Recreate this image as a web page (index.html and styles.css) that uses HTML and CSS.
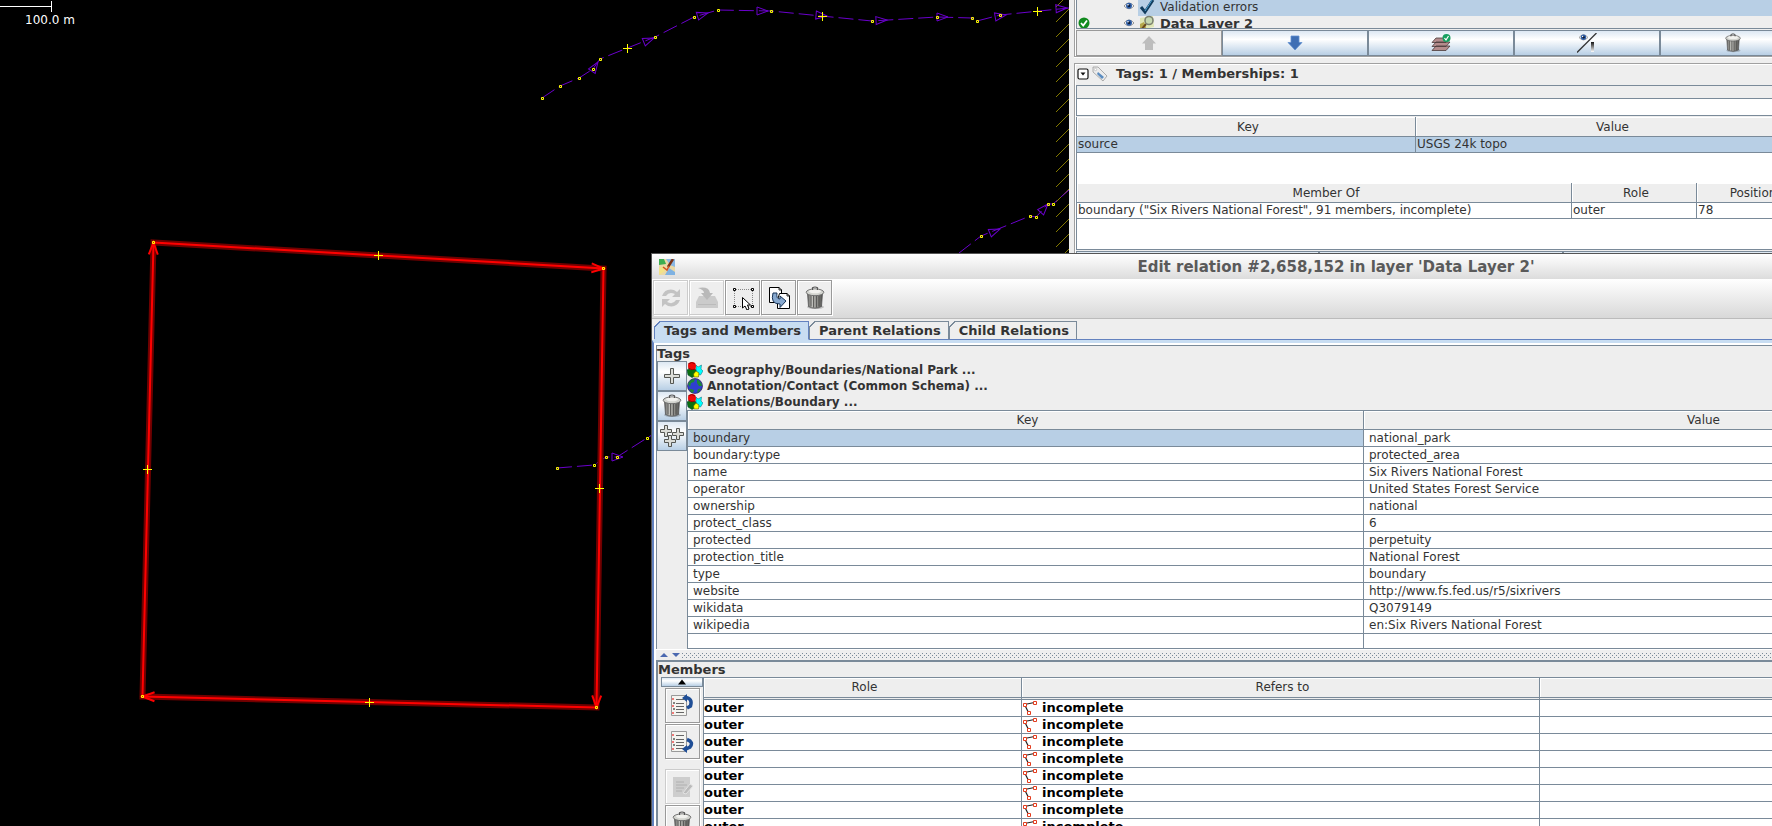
FILE: index.html
```html
<!DOCTYPE html>
<html lang="en">
<head>
<meta charset="utf-8">
<title>Edit relation #2,658,152 in layer 'Data Layer 2'</title>
<link rel="stylesheet" href="styles.css">
</head>
<body>
<svg class="sprite" aria-hidden="true">
  <defs>
    <linearGradient id="metal" x1="0" x2="1" y1="0" y2="0">
      <stop offset="0" stop-color="#5c5c5a"/><stop offset=".3" stop-color="#c4c4c0"/><stop offset=".6" stop-color="#989894"/><stop offset="1" stop-color="#4f4f4d"/>
    </linearGradient>
    <linearGradient id="fade" x1="0" x2="0" y1="0" y2="1">
      <stop offset="0" stop-color="#111"/><stop offset="1" stop-color="#fff"/>
    </linearGradient>
  </defs>
  <symbol id="trash" viewBox="0 0 24 24">
    <ellipse cx="12.500" cy="21" rx="8.500" ry="2" fill="#000" opacity=".2"/>
    <path d="M4.500 7 5.500 20.500Q12 23.800 18.500 20.500L19.500 7Z" fill="url(#metal)" stroke="#555" stroke-width=".8"/>
    <path d="M8 9v11.500M10.600 9.500v12M13.400 9.500v12M16 9v11.500" stroke="#4c4c4a" stroke-width=".9"/>
    <ellipse cx="12" cy="6.300" rx="8.800" ry="3.400" fill="#d3d4cf" stroke="#666" stroke-width=".9"/>
    <ellipse cx="12" cy="5.300" rx="6" ry="1.900" fill="#f1f1ee"/>
    <path d="M9.500 4V1.800Q12 .2 14.500 1.800V4" fill="none" stroke="#555" stroke-width="1.200"/>
  </symbol>
  <symbol id="eye" viewBox="0 0 12 10">
    <path d="M1 5Q6-1 11 5 6 10.500 1 5Z" fill="#fff" stroke="#888" stroke-width=".9"/>
    <circle cx="6" cy="4.800" r="3" fill="#2f5fa8"/><circle cx="6" cy="4.800" r="1.400" fill="#0d1c38"/><circle cx="5" cy="3.800" r=".8" fill="#fff"/>
  </symbol>
  <symbol id="plus" viewBox="0 0 18 18">
    <path d="M7.500 1.500h3v6h6v3h-6v6h-3v-6h-6v-3h6z" fill="#dcddd8" stroke="#555753"/>
  </symbol>
  <symbol id="preset" viewBox="0 0 16 16">
    <path d="M9 3 11 5 14.500 3 14 7 16 9 13.500 13 9 12Z" fill="#0ff" stroke="#067" stroke-width=".5"/>
    <path d="M0 8 4 6 9 8 8 14 5 15.500 1 13Z" fill="#0a7010" stroke="#043" stroke-width=".6"/>
    <circle cx="5" cy="4" r="4" fill="#f00808"/><path d="M1 2Q5-1 8 2M1 6Q5 9 9 7" fill="none" stroke="#700" stroke-width=".7"/>
    <path d="M9 9 12 11 11.500 15 7 15 6.500 12Z" fill="#ff0" stroke="#550" stroke-width=".6"/>
  </symbol>
  <symbol id="globe" viewBox="0 0 16 16">
    <circle cx="8" cy="8" r="7.500" fill="#2e3fd0" stroke="#204" stroke-width=".6"/>
    <path d="M1 6Q3 1 8 1L7 4 4 5 3 9ZM10 1.500Q15 4 15 8L12 8 10 5ZM4 11 7 12 6 15Q3 14 2 11ZM11 11 14 10.500Q13 14 10 15Z" fill="#1d8738"/>
  </symbol>
  <symbol id="way" viewBox="0 0 16 16">
    <path d="M2.500 4.500 12.500 2.500M2.500 4.500 6.500 12.500" stroke="#222" stroke-width="1.200" fill="none"/>
    <path d="M1.500 3.500h3v3h-3zM11.500 1.500h3v3h-3zM5.500 11.500h3v3h-3z" fill="#fff" stroke="#e23c1e"/>
  </symbol>
  <symbol id="list" viewBox="0 0 24 24">
    <path d="M1.500 1.500h15v20h-15z" fill="#f4f4f0" stroke="#999"/>
    <path d="M6 5.500h8M6 9.500h8M6 12.500h8M6 15.500h8M6 18.500h8" stroke="#666"/>
    <path d="M3 4v2M3 11v2M3 18v2" stroke="#e00"/><path d="M4 8v2M4 14v2" stroke="#111"/>
  </symbol>
</svg>

<div class="desktop">
  <div class="workspace">
    <main class="map">
      <svg class="map-canvas" role="img" aria-label="Map view">
        <defs>
          <pattern id="hatch" patternUnits="userSpaceOnUse" x="1056" y="7" width="15" height="15">
            <path d="M-1 16 16-1M-1 1 1-1M14 16 16 14" stroke="#847a00" stroke-width="1"/>
          </pattern>
          <pattern id="dots" patternUnits="userSpaceOnUse" width="4" height="4">
            <path d="M0 0h1v1H0zM2 2h1v1H2z" fill="#7a8a99"/>
          </pattern>
          <path id="cross" d="M-4 0H5M.5-4.500V4.500" stroke="#ff0" fill="none"/>
          <path id="head" d="M0 0-11-4V4Z" fill="none" stroke="#6a00cc"/>
          <path id="node" d="M-1-1H1V1H-1Z" fill="none" stroke="#ff0"/>
          <path id="arrow" d="M-12-4.500 0 0-12 4.500" fill="none" stroke="#f00" stroke-width="2"/>
        </defs>
        <rect x="1056" y="0" width="13" height="253" fill="url(#hatch)"/>
        <g class="stream">
          <path d="M542 98 560 86 579 78 593 69 600 59 655 37 694 17 718 10 771 11 872 21 937 17 972 18 977 21 1000 15 1069 8"/>
          <path d="M959 253 981 236 1030 216 1036 217 1048 204 1053 204 1069 190"/>
          <path d="M557 468 594 465 606 457 617 457 647 438 652 435"/>
        </g>
        <use href="#head" transform="translate(598 62) rotate(-56)"/>
        <use href="#head" transform="translate(654 38) rotate(-22)"/>
        <use href="#head" transform="translate(708 13) rotate(-17)"/>
        <use href="#head" transform="translate(768 11)"/>
        <use href="#head" transform="translate(827 16) rotate(5)"/>
        <use href="#head" transform="translate(887 20) rotate(-3)"/>
        <use href="#head" transform="translate(948 17)"/>
        <use href="#head" transform="translate(1006 15) rotate(-10)"/>
        <use href="#head" transform="translate(1067 8) rotate(-4)"/>
        <use href="#head" transform="translate(1000 229) rotate(-22)"/>
        <use href="#head" transform="translate(1048 204) rotate(-48)"/>
        <use href="#head" transform="translate(623 457)"/>
        <g class="selected-way">
          <path class="halo" d="M153.500 242.500 603.500 268.500 596.500 707.500 142.500 696.500Z"/>
          <path class="core" d="M153.500 242.500 603.500 268.500 596.500 707.500 142.500 696.500Z"/>
        </g>
        <use href="#arrow" transform="translate(603.500 268.500) rotate(3)"/>
        <use href="#arrow" transform="translate(596.500 707.500) rotate(91)"/>
        <use href="#arrow" transform="translate(142.500 696.500) rotate(181)"/>
        <use href="#arrow" transform="translate(153.500 242.500) rotate(-89)"/>
        <g id="nodes">
          <use href="#node" x="542.500" y="98.500"/><use href="#node" x="560.500" y="86.500"/><use href="#node" x="579.500" y="78.500"/><use href="#node" x="593.500" y="69.500"/><use href="#node" x="600.500" y="59.500"/><use href="#node" x="655.500" y="37.500"/><use href="#node" x="694.500" y="17.500"/><use href="#node" x="718.500" y="10.500"/><use href="#node" x="771.500" y="11.500"/><use href="#node" x="872.500" y="21.500"/><use href="#node" x="937.500" y="17.500"/><use href="#node" x="972.500" y="18.500"/><use href="#node" x="977.500" y="21.500"/><use href="#node" x="1000.500" y="15.500"/>
          <use href="#node" x="981.500" y="236.500"/><use href="#node" x="1030.500" y="216.500"/><use href="#node" x="1036.500" y="217.500"/><use href="#node" x="1048.500" y="204.500"/><use href="#node" x="1053.500" y="204.500"/>
          <use href="#node" x="557.500" y="468.500"/><use href="#node" x="594.500" y="465.500"/><use href="#node" x="606.500" y="457.500"/><use href="#node" x="617.500" y="457.500"/><use href="#node" x="647.500" y="438.500"/>
          <use href="#node" x="153.500" y="242.500"/><use href="#node" x="603.500" y="268.500"/><use href="#node" x="596.500" y="707.500"/><use href="#node" x="142.500" y="696.500"/>
        </g>
        <use href="#cross" x="627" y="48.500"/><use href="#cross" x="822" y="16.500"/><use href="#cross" x="1037" y="11.500"/>
        <use href="#cross" x="378" y="255.500"/><use href="#cross" x="599" y="488.500"/><use href="#cross" x="369" y="702.500"/><use href="#cross" x="147" y="469.500"/>
        <path d="M0 6.500H51.500M51.500 1V12" stroke="#fff" fill="none"/>
        <text class="scale-text" x="25" y="24">100.0 m</text>
      </svg>
    </main>

    <aside class="sidebar">
      <section class="frame layers">
        <div class="layer-list">
          <div class="layer-row">
            <span></span>
            <svg class="eye" width="12" height="10"><use href="#eye"/></svg>
            <div class="layer-name selected">
              <svg width="16" height="16" viewBox="0 0 16 16"><path d="M2 7 6 12 14 0" fill="none" stroke="#123d5e" stroke-width="3"/><path d="M6 11 13 0" stroke="#4da0d0" stroke-width="1"/></svg>
              <span>Validation errors</span>
            </div>
          </div>
          <div class="layer-row">
            <svg class="ok" width="12" height="12" viewBox="0 0 12 12"><circle cx="6" cy="6" r="5.500" fill="#118a1e"/><path d="M3 6 5.200 8.500 9 3.500" fill="none" stroke="#fff" stroke-width="1.800"/></svg>
            <svg class="eye" width="12" height="10"><use href="#eye"/></svg>
            <div class="layer-name">
              <svg width="16" height="16" viewBox="0 0 16 16"><path d="M1 3 14 1 15 12 1 15Z" fill="#dfe6b4"/><path d="M1 9 5 7 8 15H1Z" fill="#b5a84c"/><path d="M2 15 7 9" stroke="#6b4a1e" stroke-width="2"/><circle cx="10" cy="5.500" r="4" fill="#c6d8b0" stroke="#7c8270" stroke-width="1.600"/></svg>
              <b>Data Layer 2</b>
            </div>
          </div>
        </div>
        <div class="layer-actions">
          <button class="flat" disabled aria-label="Move layer up"><svg width="16" height="16" viewBox="0 0 16 16"><path d="M8 1 15 8.500H12V15H4V8.500H1Z" fill="#bdbdbd"/></svg></button>
          <button aria-label="Move layer down"><svg width="16" height="16" viewBox="0 0 16 16"><path d="M4 1H12V7.500H15L8 15 1 7.500H4Z" fill="#3f6fb4" stroke="#5f8fd0" stroke-width=".8"/></svg></button>
          <button aria-label="Activate layer"><svg width="20" height="20" viewBox="0 0 20 20"><path d="M5 13H19L15 17.500H1ZM5 9H19L15 13.500H1ZM5 5H19L15 9.500H1Z" fill="#b48c8c" stroke="#4a3a3a" stroke-width=".8"/><circle cx="15.500" cy="5" r="4" fill="#16a060"/><path d="M13.500 5 15 7 17.500 3" fill="none" stroke="#fff" stroke-width="1.200"/></svg></button>
          <button aria-label="Toggle visibility"><svg width="20" height="20" viewBox="0 0 20 20"><use href="#eye" x="1" y="0" width="11" height="9"/><path d="M0 19.500 19.500 0" stroke="#333" stroke-width="1.300"/><rect x="14" y="9" width="3" height="10" fill="url(#fade)"/></svg></button>
          <button aria-label="Delete layer"><svg width="20" height="20"><use href="#trash"/></svg></button>
        </div>
      </section>

      <section class="frame props">
        <h2 class="props-title">
          <svg width="12" height="12" viewBox="0 0 12 12"><rect x="1" y="1" width="10" height="10" rx="1.500" fill="#fff" stroke="#111" stroke-width="1.200"/><path d="M3.500 4.500H8.500L6 7.500Z" fill="#111"/></svg>
          <svg width="16" height="16" viewBox="0 0 16 16"><path d="M1 1H6L15 10 11 15 1 6Z" fill="#ececec" stroke="#999" stroke-width=".8"/><path d="M6 6 12 11 10 13 5 8Z" fill="#5b8cc0"/><circle cx="3.500" cy="3.500" r="1.200" fill="#fff" stroke="#aaa" stroke-width=".6"/></svg>
          <span>Tags: 1 / Memberships: 1</span>
        </h2>
        <div class="props-spacer"></div>
        <input class="filter" type="text" aria-label="Filter tags">
        <table class="grid small tags-small">
          <colgroup><col class="c-key"><col></colgroup>
          <thead><tr><th>Key</th><th>Value</th></tr></thead>
          <tbody><tr class="sel"><td>source</td><td>USGS 24k topo</td></tr></tbody>
        </table>
        <table class="grid small">
          <colgroup><col class="c-member"><col class="c-role"><col></colgroup>
          <thead><tr><th>Member Of</th><th>Role</th><th>Position</th></tr></thead>
          <tbody><tr><td>boundary ("Six Rivers National Forest", 91 members, incomplete)</td><td>outer</td><td>78</td></tr></tbody>
        </table>
        <div class="props-footer"><span></span><span></span><span></span></div>
      </section>
    </aside>
  </div>

  <div class="dialog" role="dialog" aria-labelledby="dlg-title">
    <header class="titlebar">
      <svg width="16" height="16" viewBox="0 0 16 16"><path d="M0 0H16V16H0Z" fill="#ead9a6"/><path d="M0 0H5L7 5 0 6Z" fill="#3cae50"/><path d="M7 0H16V8L11 6Z" fill="#8ab8e4"/><path d="M6 16 10 9 16 13V16Z" fill="#7fb2e2"/><path d="M0 9 5 7 6 12 0 16Z" fill="#f3e387"/><path d="M14 0 9 8" stroke="#7a3317" stroke-width="2.500"/><path d="M4 8 8 11 10 7" fill="none" stroke="#d05224" stroke-width="1.500"/></svg>
      <h1 id="dlg-title">Edit relation #2,658,152 in layer 'Data Layer 2'</h1>
    </header>
    <div class="toolbar">
      <button class="tool" disabled aria-label="Refresh"><svg width="24" height="24" viewBox="0 0 24 24"><path d="M3 10Q6 2 15 4L18 6 21 3V11H13L16 8Q10 5 7 10ZM21 14Q18 22 9 20L6 18 3 21V13H11L8 16Q14 19 17 14Z" fill="#c3c3c3"/></svg></button>
      <button class="tool" disabled aria-label="Apply"><svg width="24" height="24" viewBox="0 0 24 24"><path d="M4 10H20L23 16V22H1V16Z" fill="#cbcbcb"/><path d="M3 2Q14 0 15 7H18L12 14 6 7H9Q9 4 3 2Z" fill="#b9b9b9"/><path d="M3 18.500H21" stroke="#bbb"/></svg></button>
      <button class="tool" aria-label="Select relation"><svg width="24" height="24" viewBox="0 0 24 24"><path d="M3 3.500H21M3.500 3V21M21.500 3V21M3 20.500H21" stroke="#888" stroke-dasharray="1 1" fill="none"/><path d="M2.500 2.500h2v2h-2zM20.500 2.500h2v2h-2zM2.500 19.500h2v2h-2zM20.500 19.500h2v2h-2z" fill="#fff" stroke="#000"/><path d="M11.500 11.500V22L14 20 16 24 18 23 16.500 19H19.500Z" fill="#fff" stroke="#000"/></svg></button>
      <button class="tool" aria-label="Duplicate relation"><svg width="24" height="24" viewBox="0 0 24 24"><path d="M2.500 1.500H12L14.500 4V16.500H2.500Z" fill="#fff" stroke="#000"/><path d="M12.500 7.500H20L22.500 10V22.500H10.500V14Z" fill="#fff" stroke="#000"/><path d="M20 7V10H23M12 1V4H15" fill="none" stroke="#000" stroke-width=".8"/><path d="M6 7Q3 18 13 18V21.500L19 15 13 10V13Q9 13 10 7Z" fill="#88a9cf" stroke="#173356"/></svg></button>
      <button class="tool" aria-label="Delete relation"><svg width="24" height="24"><use href="#trash"/></svg></button>
    </div>
    <div class="tabs" role="tablist">
      <button class="tab active" role="tab" aria-selected="true">Tags and Members</button>
      <button class="tab" role="tab">Parent Relations</button>
      <button class="tab" role="tab">Child Relations</button>
    </div>
    <div class="tab-page">
      <section class="panel tags-panel">
        <h2>Tags</h2>
        <div class="panel-body">
          <div class="side-buttons">
            <button aria-label="Add tag"><svg width="18" height="18"><use href="#plus"/></svg></button>
            <button aria-label="Delete tag"><svg width="24" height="24"><use href="#trash"/></svg></button>
            <button aria-label="Paste tags"><svg width="26" height="24" viewBox="0 0 26 24"><path d="M5.500 1.500h3v4h4v3h-4v4h-3v-4h-4v-3h4z" fill="#dcddd8" stroke="#555753"/><path d="M17.500 4.500h3v4h4v3h-4v4h-3v-4h-4v-3h4z" fill="#dcddd8" stroke="#555753"/><path d="M9.500 11.500h3v4h4v3h-4v4h-3v-4h-4v-3h4z" fill="#dcddd8" stroke="#555753"/></svg></button>
          </div>
          <div class="panel-main">
            <ul class="presets">
              <li><svg width="16" height="16"><use href="#preset"/></svg><a href="#">Geography/Boundaries/National Park ...</a></li>
              <li><svg width="16" height="16"><use href="#globe"/></svg><a href="#">Annotation/Contact (Common Schema) ...</a></li>
              <li><svg width="16" height="16"><use href="#preset"/></svg><a href="#">Relations/Boundary ...</a></li>
            </ul>
            <table class="grid tags">
              <colgroup><col class="half"><col></colgroup>
              <thead><tr><th>Key</th><th>Value</th></tr></thead>
              <tbody>
                <tr><td class="sel">boundary</td><td>national_park</td></tr>
                <tr><td>boundary:type</td><td>protected_area</td></tr>
                <tr><td>name</td><td>Six Rivers National Forest</td></tr>
                <tr><td>operator</td><td>United States Forest Service</td></tr>
                <tr><td>ownership</td><td>national</td></tr>
                <tr><td>protect_class</td><td>6</td></tr>
                <tr><td>protected</td><td>perpetuity</td></tr>
                <tr><td>protection_title</td><td>National Forest</td></tr>
                <tr><td>type</td><td>boundary</td></tr>
                <tr><td>website</td><td>http://www.fs.fed.us/r5/sixrivers</td></tr>
                <tr><td>wikidata</td><td>Q3079149</td></tr>
                <tr><td>wikipedia</td><td>en:Six Rivers National Forest</td></tr>
                <tr class="blank"><td></td><td></td></tr>
              </tbody>
            </table>
          </div>
        </div>
      </section>
      <div class="splitter">
        <svg width="24" height="6" viewBox="0 0 24 6"><path d="M2 5 6 1 10 5Z" fill="#4a68b0"/><path d="M14 1H22L18 5Z" fill="#4a68b0"/></svg>
        <svg class="bumps"><rect width="100%" height="100%" fill="url(#dots)"/></svg>
      </div>
      <section class="panel members-panel">
        <h2>Members</h2>
        <div class="panel-body">
          <div class="member-tools">
            <button class="scroll-up" aria-label="Scroll up"><svg width="10" height="6" viewBox="0 0 10 6"><path d="M1 5.500 5 .5 9 5.500Z" fill="#000"/></svg></button>
            <button class="tool" aria-label="Add before"><svg width="24" height="24" viewBox="0 0 24 24"><use href="#list"/><path d="M15 3.500Q23 4 20.500 12L17 14" fill="none" stroke="#1f4e96" stroke-width="3.500"/><path d="M17 0V8L12 4Z" fill="#1f4e96"/></svg></button>
            <button class="tool" aria-label="Add after"><svg width="24" height="24" viewBox="0 0 24 24"><use href="#list"/><path d="M17 9.500Q24 12 20 17L16 19" fill="none" stroke="#1f4e96" stroke-width="3.500"/><path d="M17 15V23L12 19Z" fill="#1f4e96"/></svg></button>
            <button class="tool gap" disabled aria-label="Edit member"><svg width="24" height="24" viewBox="0 0 24 24"><path d="M3 2H20V22H3Z" fill="#cdcdcd"/><path d="M6 7H14M6 10H17M6 13H14M6 16H12" stroke="#b0b0b0"/><path d="M13 18 20 9 23 11 16 19Z" fill="#bbb" stroke="#e2e2e2"/></svg></button>
            <button class="tool" aria-label="Remove member"><svg width="24" height="24"><use href="#trash"/></svg></button>
          </div>
          <table class="grid members">
            <colgroup><col class="c-mrole"><col class="c-refers"><col></colgroup>
            <thead><tr><th>Role</th><th>Refers to</th><th></th></tr></thead>
            <tbody>
              <tr><td>outer</td><td><svg width="16" height="16"><use href="#way"/></svg>incomplete</td><td></td></tr>
              <tr><td>outer</td><td><svg width="16" height="16"><use href="#way"/></svg>incomplete</td><td></td></tr>
              <tr><td>outer</td><td><svg width="16" height="16"><use href="#way"/></svg>incomplete</td><td></td></tr>
              <tr><td>outer</td><td><svg width="16" height="16"><use href="#way"/></svg>incomplete</td><td></td></tr>
              <tr><td>outer</td><td><svg width="16" height="16"><use href="#way"/></svg>incomplete</td><td></td></tr>
              <tr><td>outer</td><td><svg width="16" height="16"><use href="#way"/></svg>incomplete</td><td></td></tr>
              <tr><td>outer</td><td><svg width="16" height="16"><use href="#way"/></svg>incomplete</td><td></td></tr>
              <tr><td>outer</td><td><svg width="16" height="16"><use href="#way"/></svg>incomplete</td><td></td></tr>
            </tbody>
          </table>
        </div>
      </section>
    </div>
  </div>
</div>
</body>
</html>
```

FILE: styles.css
```css
:root {
  --line: #7a8a99;
  --face: #eeeeee;
  --select: #b8cfe5;
  --accent: #6382bf;
  --tab: #c8ddf2;
  --ink: #333333;
  --ocean: linear-gradient(#dde8f3, #ffffff 35%, #b8cfe5);
}
* { box-sizing: border-box; }
html, body { height: 100%; }
body {
  margin: 0;
  overflow: hidden;
  background: #000;
  color: var(--ink);
  font: 12px/16px "DejaVu Sans", Verdana, sans-serif;
}
h1, h2, ul { margin: 0; padding: 0; list-style: none; }
svg { display: block; flex: none; }
button { font: inherit; color: inherit; margin: 0; padding: 0; border-radius: 0; }
.sprite { position: absolute; width: 0; height: 0; }

.desktop { position: relative; height: 100vh; overflow: hidden; }
.workspace {
  display: grid;
  grid-template-columns: minmax(0, 1fr) 744px;
  width: calc(100% + 41px);
  height: 100%;
}

/* Map */
.map { background: #000; overflow: hidden; }
.map-canvas { width: 100%; height: 100%; }
.stream path { fill: none; stroke: #6a00cc; stroke-dasharray: 15 5; }
.selected-way path { fill: none; }
.halo { stroke: #700000; stroke-width: 6; }
.core { stroke: #ff0000; stroke-width: 2; }
.scale-text { fill: #fff; font-size: 12px; }

/* Sidebar */
.sidebar { background: var(--face); padding: 0 5px; overflow: hidden; }
.frame { border: 1px solid #a0a0a0; box-shadow: inset 1px 0 #fff, 0 1px #fff; padding: 0 1px; }
.layers { border-top: 0; }
.layer-list {
  height: 29px;
  overflow: hidden;
  border-bottom: 1px solid var(--line);
  border-left: 1px solid var(--line);
}
.layer-row { display: grid; grid-template-columns: 46px 15px 1fr; height: 15px; }
.layer-row + .layer-row { height: 16px; }
.layer-row .eye { margin-top: 1px; }
.layer-row + .layer-row .eye { margin-top: 3px; }
.layer-row .ok { margin: 2px 0 0 1px; }
.layer-name { display: flex; gap: 5px; line-height: 14px; padding-left: 1px; }
.layer-name b { font-size: 13px; line-height: 18px; }
.selected, .sel, .sel td { background: var(--select); }
.layer-actions { display: grid; grid-template-columns: repeat(5, 1fr); padding-top: 1px; }
.layer-actions button {
  display: grid;
  place-items: center;
  height: 26px;
  border: 1px solid var(--line);
  background: var(--ocean);
}
.layer-actions .flat { background: var(--face); border-color: #999; }

.props { margin-top: 6px; height: 100vh; box-shadow: inset 1px 1px #fff; }
.props-title {
  display: flex;
  align-items: center;
  height: 21px;
  gap: 3px;
  padding: 0 0 1px 1px;
  font-size: 13px;
}
.props-title span { margin-left: 5px; }
.props-spacer { height: 13px; border-top: 1px solid var(--line); border-left: 1px solid var(--line); }
.filter {
  display: block;
  width: 100%;
  height: 18px;
  padding: 0 2px;
  border: 1px solid var(--line);
  background: #fff;
  font: inherit;
}
.props-footer {
  display: grid;
  grid-template-columns: repeat(3, 1fr);
  border-top: 1px solid var(--line);
  padding-top: 1px;
}
.props-footer span { height: 26px; border: 1px solid var(--line); background: var(--ocean); }

/* Tables */
.grid { width: 100%; table-layout: fixed; border-collapse: separate; border-spacing: 0; background: #fff; }
.grid th, .grid td {
  padding: 0 4px;
  border-bottom: 1px solid var(--line);
  border-right: 1px solid var(--line);
  white-space: nowrap;
  overflow: hidden;
  text-align: left;
  vertical-align: top;
}
.grid th {
  padding: 1px 0 0 4px;
  background: var(--face);
  font-weight: normal;
  text-align: center;
  box-shadow: inset 1px 1px #fff;
}
.half { width: 50%; }
.small { border-left: 1px solid var(--line); }
.grid.small th { height: 20px; padding-top: 2px; }
.grid.small td { height: 16px; line-height: 15px; padding: 0 1px; }
.tags-small { margin-top: 1px; }
.small tbody::after { content: ""; display: block; height: 30px; }
.c-key { width: 339px; }
.c-member { width: 495px; }
.c-role { width: 125px; }

/* Dialog window */
.dialog {
  position: absolute;
  left: 651px;
  right: -278px;
  top: 253px;
  bottom: 0;
  display: flex;
  flex-direction: column;
  overflow: hidden;
  background: var(--face);
  border-top: 1px solid #555;
  border-left: 1px solid #555;
}
.titlebar {
  display: flex;
  flex: none;
  align-items: center;
  height: 25px;
  padding: 0 53px 0 7px;
  background: linear-gradient(#ffffff, #dcdcdc);
}
.titlebar h1 { flex: 1; text-align: center; font-size: 15px; line-height: 24px; color: #5a5a5a; }
.toolbar {
  display: flex;
  flex: none;
  gap: 1px;
  height: 40px;
  padding: 1px;
  border-bottom: 1px solid #bbb;
  background: linear-gradient(#ffffff, #d8d8d8);
}
.tool {
  display: grid;
  flex: none;
  place-items: center;
  width: 35px;
  height: 35px;
  background: var(--face);
  border: 1px solid #999;
  box-shadow: inset 1px 1px #fff, 1px 1px #fff;
}
.tool:disabled { border-color: #ccc; }

.tabs { display: flex; flex: none; padding: 2px 0 0 2px; }
.tab {
  --edge: var(--line);
  --fill: var(--face);
  height: 19px;
  padding: 1px 7px 0 10px;
  border: 0;
  border-bottom: 1px solid var(--accent);
  border-right: 1px solid var(--edge);
  background:
    linear-gradient(135deg, var(--face) 4px, var(--edge) 4px 5px, var(--fill) 5px) 0 0 / 7px 7px no-repeat,
    linear-gradient(var(--edge), var(--edge)) 7px 0 / 100% 1px no-repeat,
    linear-gradient(var(--edge), var(--edge)) 0 7px / 1px 100% no-repeat,
    var(--fill);
  font-size: 13px;
  font-weight: bold;
  line-height: 18px;
}
.tab.active { --edge: var(--accent); --fill: var(--tab); border-bottom-color: var(--tab); }
.tabs::after { content: ""; flex: 1; border-bottom: 1px solid var(--accent); }

.tab-page {
  flex: 1;
  min-height: 0;
  padding: 2px 9px 0 2px;
  border-left: 2px solid var(--accent);
  border-top: 3px solid var(--tab);
  background: #fff;
}
.panel { background: var(--face); border: 1px solid var(--line); }
.panel h2 { height: 15px; font-size: 13px; line-height: 15px; }
.panel-body { display: flex; }
.tags-panel { border-bottom: 0; }
.tags-panel .presets { padding-top: 1px; }
.side-buttons { width: 30px; }
.side-buttons button {
  display: grid;
  place-items: center;
  width: 30px;
  height: 30px;
  border: 1px solid var(--line);
  background: var(--ocean);
}
.panel-main { flex: 1; min-width: 0; }
.presets li { display: flex; gap: 4px; height: 16px; }
.presets a { color: inherit; font-weight: bold; text-decoration: none; }
.tags { border-left: 1px solid var(--line); border-top: 1px solid var(--line); }
.tags th { height: 19px; }
.tags td { height: 17px; line-height: 16px; }
.grid.tags td { padding-left: 5px; }
.tags .blank td { height: 15px; }
.splitter { display: flex; align-items: center; height: 10px; margin-top: 1px; padding-left: 2px; background: var(--face); }
.bumps { flex: 1; height: 5px; }
.members-panel { border-width: 2px; }
.members-panel .panel-body { align-items: flex-start; }
.member-tools { display: flex; flex-direction: column; align-items: center; width: 45px; gap: 1px; padding-left: 3px; }
.scroll-up {
  display: grid;
  place-items: center;
  align-self: stretch;
  height: 10px;
  border: 1px solid var(--line);
  background: var(--ocean);
}
.member-tools .gap { margin-top: 9px; }
.members { flex: 1; width: auto; min-width: 0; border-left: 1px solid var(--line); border-top: 1px solid var(--line); }
.members th { height: 22px; border-bottom: 3px double var(--line); }
.grid.members th { border-bottom: 3px double var(--line); }
.grid.members td { height: 17px; padding: 0; font-size: 13px; font-weight: bold; line-height: 16px; color: #000; }
.members td svg { float: left; margin-right: 4px; }
.c-mrole { width: 318px; }
.c-refers { width: 518px; }
```
